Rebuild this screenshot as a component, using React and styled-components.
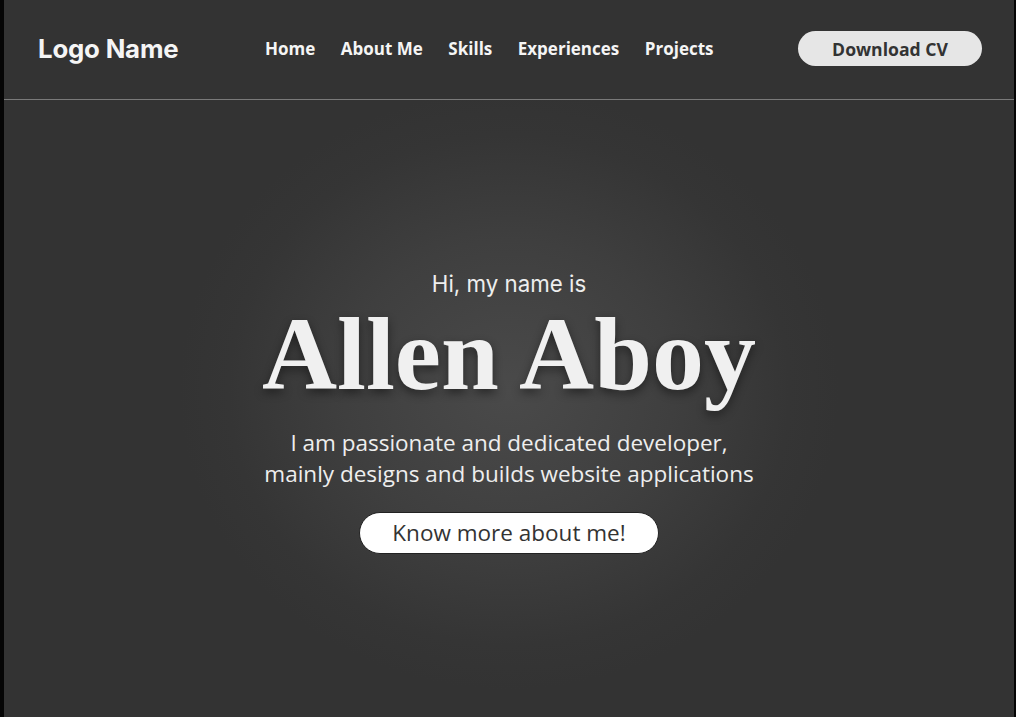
import styled, { createGlobalStyle } from "styled-components";

const GlobalStyle = createGlobalStyle`
  html, body {
    margin: 0;
    padding: 0;
    background: #000;
  }
  * {
    box-sizing: border-box;
  }
`;

const links = ["Home", "About Me", "Skills", "Experiences", "Projects"];

export default function App() {
  return (
    <>
      <GlobalStyle />
      <Page>
        <Header>
          <Logo>Logo Name</Logo>
          <Nav>
            {links.map((l) => (
              <NavLink key={l}>{l}</NavLink>
            ))}
          </Nav>
          <CvButton>Download CV</CvButton>
        </Header>
        <Hero>
          <Greeting>Hi, my name is</Greeting>
          <Name>Allen Aboy</Name>
          <Intro>
            I am passionate and dedicated developer,
            <br />
            mainly designs and builds website applications
          </Intro>
          <MoreButton>Know more about me!</MoreButton>
        </Hero>
      </Page>
    </>
  );
}

const Page = styled.div`
  width: 1016px;
  height: 717px;
  display: flex;
  flex-direction: column;
  background: #333333;
  border-left: 4px solid #050505;
  border-right: 2px solid #050505;
  overflow: hidden;
`;

const Header = styled.header`
  height: 100px;
  flex-shrink: 0;
  display: flex;
  align-items: center;
  padding: 0 32px 2px 34px;
  border-bottom: 1px solid #7a7a7a;
`;

const Logo = styled.div`
  font-family: Inter, "Liberation Sans", sans-serif;
  font-weight: 700;
  font-size: 25.8px;
  letter-spacing: -0.2px;
  color: #f5f5f5;
  width: 227px;
`;

const Nav = styled.nav`
  display: flex;
  gap: 25.5px;
  flex: 1;
`;

const NavLink = styled.a`
  font-family: "Open Sans", sans-serif;
  font-weight: 700;
  font-size: 17px;
  color: #f5f5f5;
  cursor: pointer;
`;

const CvButton = styled.button`
  width: 184px;
  height: 35px;
  border: none;
  border-radius: 18px;
  background: #e6e6e6;
  color: #333;
  font-family: "Open Sans", sans-serif;
  font-weight: 700;
  font-size: 17.6px;
  padding: 0;
`;

const Hero = styled.main`
  flex: 1;
  display: flex;
  flex-direction: column;
  align-items: center;
  justify-content: center;
  padding-top: 7px;
  background: radial-gradient(
    ellipse 330px 300px at 50% 47%,
    #4a4a4a 0%,
    #3f3f3f 50%,
    #353535 85%,
    #333333 100%
  );
`;

const Greeting = styled.div`
  font-family: Inter, "Liberation Sans", sans-serif;
  font-size: 22.3px;
  color: #eeeeee;
  line-height: 26px;
`;

const Name = styled.h1`
  margin: 2px 0 0;
  font-family: "Liberation Serif", serif;
  font-weight: 700;
  font-size: 104px;
  line-height: 110px;
  color: #f0f0f0;
  text-shadow: 0 4px 10px rgba(0, 0, 0, 0.45);
`;

const Intro = styled.p`
  margin: 18px 0 0;
  font-family: "Open Sans", sans-serif;
  font-size: 22.5px;
  line-height: 31px;
  color: #eeeeee;
  text-align: center;
`;

const MoreButton = styled.button`
  margin-top: 23px;
  width: 300px;
  height: 42px;
  border: 1px solid #222;
  border-radius: 21px;
  background: #ffffff;
  color: #333;
  font-family: "Open Sans", sans-serif;
  font-size: 22.5px;
  padding: 0;
`;
